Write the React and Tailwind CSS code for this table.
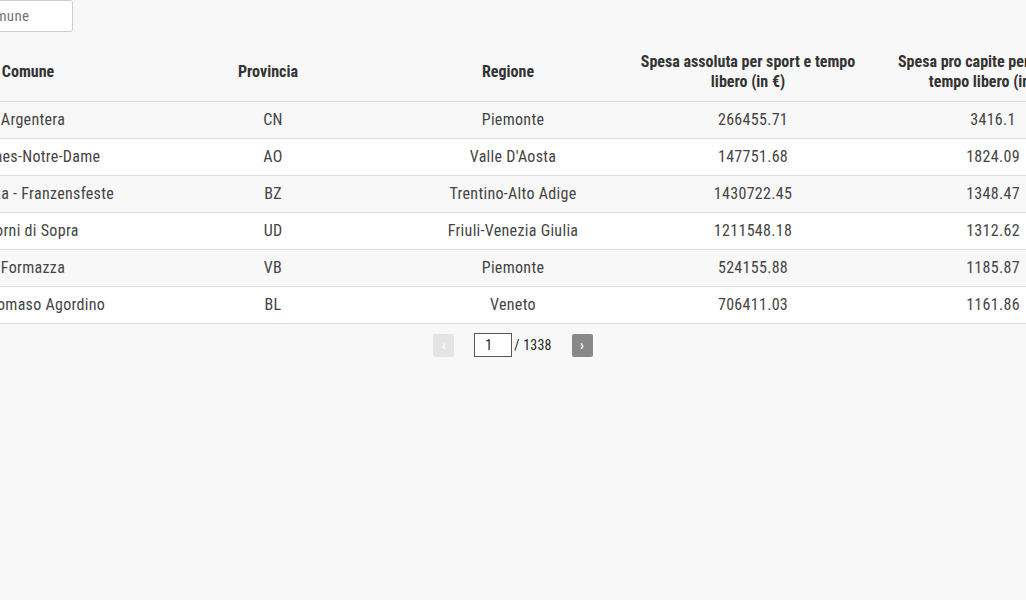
import React, { useState } from "react";

const rows = [
  { comune: "Argentera", provincia: "CN", regione: "Piemonte", assoluta: "266455.71", capite: "3416.1" },
  { comune: "Rhêmes-Notre-Dame", provincia: "AO", regione: "Valle D'Aosta", assoluta: "147751.68", capite: "1824.09" },
  { comune: "Fortezza - Franzensfeste", provincia: "BZ", regione: "Trentino-Alto Adige", assoluta: "1430722.45", capite: "1348.47" },
  { comune: "Forni di Sopra", provincia: "UD", regione: "Friuli-Venezia Giulia", assoluta: "1211548.18", capite: "1312.62" },
  { comune: "Formazza", provincia: "VB", regione: "Piemonte", assoluta: "524155.88", capite: "1185.87" },
  { comune: "San Tomaso Agordino", provincia: "BL", regione: "Veneto", assoluta: "706411.03", capite: "1161.86" },
];

const headers = [
  "Comune",
  "Provincia",
  "Regione",
  "Spesa assoluta per sport e tempo libero (in €)",
  "Spesa pro capite per sport e tempo libero (in €)",
];

export default function App() {
  const [query, setQuery] = useState("");
  const [page, setPage] = useState(1);

  return (
    <div className="min-h-screen bg-[#f8f8f8] flex justify-center font-['Roboto_Condensed','Roboto',sans-serif] font-stretch-condensed text-[#333]">
      <div className="w-[1200px] shrink-0">
        <input
          type="text"
          value={query}
          onChange={(e) => setQuery(e.target.value)}
          placeholder="Cerca un comune"
          className="block w-[160px] h-[32px] px-[8px] text-[15px] tracking-[0.3px] bg-white border border-[#ccc] rounded-[3px] placeholder:text-[#757575] focus:outline-none"
        />
        <table className="w-full mt-[11px] table-fixed border-collapse">
          <thead>
            <tr className="border-b border-[#ddd]">
              {headers.map((h) => (
                <th
                  key={h}
                  className="w-[240px] pl-[5px] pr-[15px] py-[9px] text-[16px] leading-[20px] font-bold text-center text-[#333]"
                >
                  {h}
                </th>
              ))}
            </tr>
          </thead>
          <tbody>
            {rows.map((r, i) => (
              <tr
                key={r.comune}
                className={`border-b border-[#ddd] ${i % 2 === 0 ? "bg-[#f8f8f8]" : "bg-white"}`}
              >
                <td className="px-[5px] py-[6px] text-[16px] leading-[24px] tracking-[0.3px] text-center text-[#444]">{r.comune}</td>
                <td className="px-[5px] py-[6px] text-[16px] leading-[24px] tracking-[0.3px] text-center text-[#444]">{r.provincia}</td>
                <td className="px-[5px] py-[6px] text-[16px] leading-[24px] tracking-[0.3px] text-center text-[#444]">{r.regione}</td>
                <td className="px-[5px] py-[6px] text-[16px] leading-[24px] tracking-[0.3px] text-center text-[#444]">{r.assoluta}</td>
                <td className="px-[5px] py-[6px] text-[16px] leading-[24px] tracking-[0.3px] text-center text-[#444]">{r.capite}</td>
              </tr>
            ))}
          </tbody>
        </table>
        <div className="flex items-center justify-center mt-[9px] text-[14px] tracking-[0.2px] text-[#222]">
          <button
            disabled
            className="w-[21px] h-[23px] rounded-[2px] bg-[#e4e4e4] text-white text-[14px] font-bold leading-none"
          >
            ‹
          </button>
          <input
            value={page}
            onChange={(e) => setPage(e.target.value)}
            className="ml-[20px] w-[38px] h-[24px] px-[10px] border border-[#555] bg-white text-[14px] focus:outline-none"
          />
          <span className="ml-[2px]">/ 1338</span>
          <button className="ml-[20px] w-[21px] h-[23px] rounded-[2px] bg-[#888] text-white text-[14px] font-bold leading-none">
            ›
          </button>
        </div>
      </div>
    </div>
  );
}
